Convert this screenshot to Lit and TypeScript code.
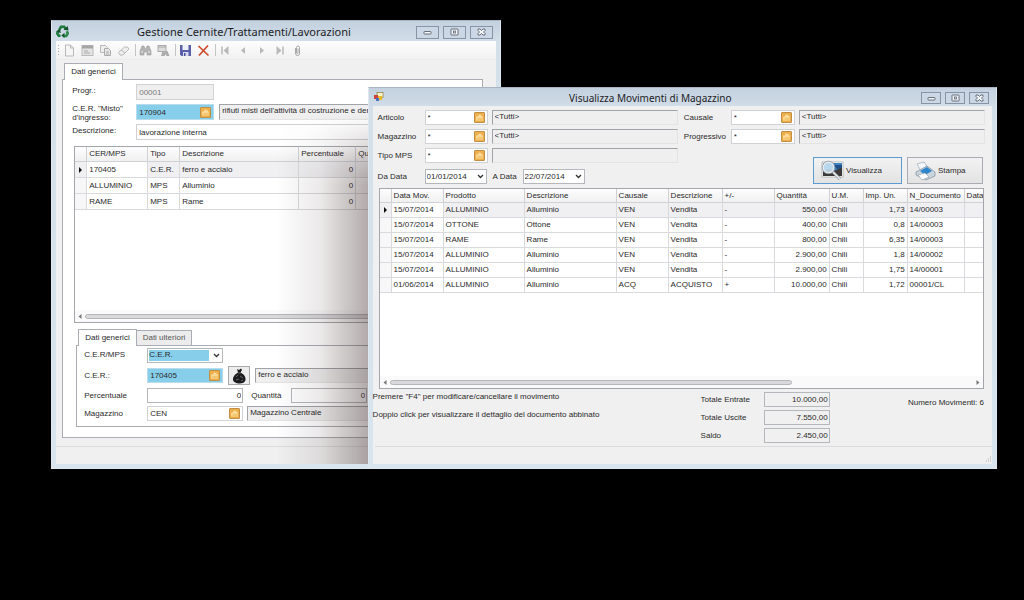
import { LitElement, html, css, svg, nothing } from "lit";
import { customElement, property } from "lit/decorators.js";

const controls = css`
  * { box-sizing: border-box; }
  :host { --ui: 8px; --line: #a9acb2; --soft: #d9dadd; }
  input, select, button {
    font: inherit; color: inherit; margin: 0; border-radius: 0; outline: none; min-width: 0;
  }
  input {
    width: 100%; height: 15px; padding: 0 2px; border: 1px solid #d0d2d6; background: #fff; display: block;
  }
  input.sunken { background: #efefef; border-color: #a0a3a8 #e4e4e4 #e4e4e4 #a0a3a8; padding: 0 2px 3px; }
  input.flat { background: #f0f0f0; }
  input.num { text-align: right; padding: 0 1px; border-color: #b4b7bc; }
  input.sky { background: #87ceeb; border-color: #b9dcec; }
  input.dim { color: #777; background: #efefef; }
  .lookup { display: grid; grid-template-columns: minmax(0, 1fr); align-items: center; }
  .lookup > * { grid-area: 1 / 1; }
  .lookup button {
    justify-self: end; width: 11px; height: 11px; margin-right: 3px; padding: 0; border: 0; background: none; display: block;
  }
  .drop { display: grid; grid-template-columns: minmax(0, 1fr); align-items: center; }
  .drop > * { grid-area: 1 / 1; }
  .drop select {
    appearance: none; width: 100%; height: 15px; padding: 0 1px; border: 1px solid #b4b7bc; background: #fff;
  }
  .drop select.picked {
    background: linear-gradient(#87ceeb, #87ceeb) 1px 1px / calc(100% - 14px) 11px no-repeat #fff;
  }
  .drop svg { justify-self: end; margin-right: 3px; pointer-events: none; }
  svg { display: block; }
  label, span { white-space: nowrap; }
  .grid { background: #fff; border: 1px solid #a3a6ab; overflow: hidden; display: flex; flex-direction: column; }
  table { table-layout: fixed; width: 100%; border-collapse: separate; border-spacing: 0; }
  th, td {
    padding: 0 2px; text-align: left; font-weight: normal; white-space: nowrap; overflow: hidden;
    border-right: 1px solid var(--soft); border-bottom: 1px solid var(--soft);
  }
  th { background: linear-gradient(#fdfdfd, #f1f1f2); border-color: #cfd1d5; }
  th:last-child { padding-right: 0; }
  td:first-child { background: #f7f7f7; }
  tr.current td { background: #f0f0f2; }
  tr.current td:nth-child(2) { background: #fff; }
  td.r { text-align: right; }
  .mark { margin-left: 1px; }
  .bar { margin-top: auto; height: 12px; display: flex; align-items: center; gap: 3px; padding: 0 3px; background: #fafafa; }
  .track { flex: 1; display: flex; }
  .thumb { height: 5px; border: 1px solid #b5b6ba; border-radius: 3px; background: #d9d9dc; }
`;

const chevron = html`<svg width="7" height="5" viewBox="0 0 7 5"><path d="M1 1l2.500 2.500L6 1" fill="none" stroke="#333" stroke-width="1.300"/></svg>`;
const arrow = (left: boolean) => html`<svg width="4" height="5" viewBox="0 0 4 5"><path d=${left ? "M3.500 0v5L.5 2.500z" : "M.5 0v5l3-2.500z"} fill="#777"/></svg>`;
const mark = html`<svg class="mark" width="5" height="6" viewBox="0 0 5 6"><path d="M1 0v6l3-3z" fill="#111"/></svg>`;

const lookup = (id: string, value: string, tone = "") => html`<div class="lookup">
  <input id=${id} class=${tone} .value=${value} />
  <button aria-label="Cerca"><svg width="11" height="11" viewBox="0 0 11 11">
    <rect x=".5" y=".5" width="10" height="10" rx=".5" fill="#eeb04c" stroke="#c08f45"/>
    <path d="M2.200 8.500V4.500h1.500L5 2.500l2 .5 1.800 2v3.500z" fill="#fbdc9c"/>
    <path d="M2.500 8.800L4 5.800h5.200l-.9 3z" fill="#f6c773"/></svg></button>
</div>`;

const drop = (id: string, value: string, tone = "") => html`<div class="drop">
  <select id=${id} class=${tone}><option>${value}</option></select>${chevron}
</div>`;

@customElement("desk-window")
class DeskWindow extends LitElement {
  @property() heading = "";
  static styles = css`
    * { box-sizing: border-box; }
    :host {
      box-sizing: border-box; isolation: isolate;
      display: flex; flex-direction: column; background: linear-gradient(#c3d0df, #d3dfe9 22px, #d9e5ee);
      border: 1px solid #dfe8ef; border-top-color: #a9b5c2; padding: 0 4px 4px;
    }
    header { display: grid; grid-template-columns: 30px minmax(0, 1fr) 94px; align-items: center; height: var(--bar, 20px); }
    h1 { margin: 0; text-align: center; font: 10px/16px "Noto Sans", sans-serif; font-size: var(--title, 10px); color: #1d1d1f; white-space: nowrap; padding-top: 2px; }
    .buttons { display: flex; gap: 4px; justify-content: flex-end; padding: 2px 3px 0 0; }
    button { width: var(--btn, 20px); height: var(--btnh, 12px); padding: 0; border: 1px solid #8694a6; background: #cbd7e4; display: grid; place-items: center; }
    svg { display: block; }
    main { flex: 1; display: flex; flex-direction: column; background: #f0f0f0; min-width: 0; }
  `;
  render() {
    return html`<header>
        <slot name="icon"></slot>
        <h1>${this.heading}</h1>
        <div class="buttons">
          <button aria-label="Riduci a icona"><svg width="9" height="8" viewBox="0 0 9 8"><rect x="1" y="3.500" width="7" height="2.500" rx=".5" fill="#f3f6f9" stroke="#5a626d" stroke-width=".9"/></svg></button>
          <button aria-label="Ingrandisci"><svg width="9" height="8" viewBox="0 0 9 8"><rect x="1" y="1" width="7" height="6" rx=".5" fill="#f3f6f9" stroke="#5a626d" stroke-width=".9"/><rect x="3.500" y="3" width="2" height="2" fill="none" stroke="#5a626d" stroke-width=".8"/></svg></button>
          <button aria-label="Chiudi"><svg width="9" height="8" viewBox="0 0 9 8"><path d="M1 1h2l1.500 1.500L6 1h2v1.500L6.500 4 8 5.500V7H6L4.500 5.500 3 7H1V5.500L2.500 4 1 2.500z" fill="#f3f6f9" stroke="#5a626d" stroke-width=".9"/></svg></button>
        </div>
      </header>
      <main><slot></slot></main>`;
  }
}

const recycle = html`<svg slot="icon" width="13" height="13" viewBox="0 0 13 13">
  <path d="M3.200 5L5 1.800h3.200L9.800 4" fill="none" stroke="#1f7a3d" stroke-width="2.600"/>
  <path d="M7.500 4.800l5 .8-.8-4.600z" fill="#12552a"/>
  <path d="M10.800 6.300l1 2.200-1.600 2.500H7.500" fill="none" stroke="#2c8a4a" stroke-width="2.600"/>
  <path d="M8.500 7.800v5.200L5.300 10.500z" fill="#12552a"/>
  <path d="M4.500 10.800H2.800L1.200 8.400l1-1.800" fill="none" stroke="#1f7a3d" stroke-width="2.600"/>
  <path d="M0 6.500l3.600-2.500L5 8z" fill="#12552a"/></svg>`;

const tool = (label: string, art: unknown) => html`<button aria-label=${label}><svg width="13" height="13" viewBox="0 0 13 13">${art}</svg></button>`;

@customElement("sorting-form")
class SortingForm extends LitElement {
  static styles = [controls, css`
    :host { flex: 1; display: flex; flex-direction: column; font: 8px/10px "Liberation Sans", Arial, sans-serif; font-size: var(--ui); color: #2a2a2a; position: relative; }
    nav { display: flex; align-items: center; height: 19px; padding: 0 1px; background: linear-gradient(#fdfdfd, #f1f1f1); border-bottom: 1px solid #ececec; }
    nav button { width: 13px; height: 13px; padding: 0; border: 0; background: none; margin-right: 5px; }
    .sep { width: 1px; height: 12px; background: #c4c4c4; margin: 0 3px 0 0; }
    .grip { width: 3px; margin-right: 3px; }
    .tabs { display: flex; }
    .tabs button { height: 17px; padding: 0 6px; border: 1px solid var(--line); border-bottom: 0; background: #fff; margin-bottom: -1px; z-index: 1; }
    .tabs button.off { background: #ececec; height: 15px; margin-top: 1px; border-left: 0; color: #555; }
    .outer { padding: 3px 13px 8px 6px; flex: 1; }
    .outer > .tabs { padding-left: 2px; }
    .panel { border: 1px solid var(--line); background: #fff; }
    .page { height: 359px; padding: 4px 0 0 11px; }
    .head { display: grid; grid-template-columns: 62px minmax(0, 1fr); row-gap: 4px; }
    .head > label { margin-left: -2px; padding-top: 2px; }
    .head > label.two { padding-top: 0; line-height: 9px; }
    .head .pair { display: grid; grid-template-columns: 78px minmax(0, 1fr); gap: 5px; }
    .head label { white-space: normal; height: 16px; }
    .head input { height: 16px; }
    .grid { height: 177px; margin-top: 6px; }
    th { height: 15px; line-height: 14px; }
    td { height: 16px; line-height: 15px; }
    .below { padding: 6px 0 0 2px; }
    .below .tabs { padding-left: 2px; }
    .inner { height: 82px; padding: 1px 0 0 7px; display: grid; grid-template-columns: 63px minmax(0, 1fr); grid-template-rows: 16px 19px 15px 15px; row-gap: 3px; align-items: center; align-content: start; }
    .row { display: flex; align-items: center; }
    .w76 { width: 76px; } .w96 { width: 96px; }
    .bag { width: 22px; height: 19px; padding: 0; border: 1px solid #a9a9a9; background: #ededed; margin: 0 5px; display: grid; place-items: center; }
    .grow { flex: 1; }
    .gap { width: 48px; padding-left: 8px; }
    .row .grow.after { margin-left: 4px; }
    footer { height: 18px; border-top: 1px solid #dcdcdc; }
    .shade { position: absolute; inset: 74px 0 0 0; pointer-events: none; z-index: 2;
      background: linear-gradient(90deg, rgba(60, 40, 40, 0) 50%, rgba(60, 40, 40, .1) 60%, rgba(60, 40, 40, .42) 72%);
      mask-image: linear-gradient(transparent, #000 70px); }
  `];
  render() {
    const g = "#b9b9b9";
    const rows = [["170405", "C.E.R.", "ferro e acciaio"], ["ALLUMINIO", "MPS", "Alluminio"], ["RAME", "MPS", "Rame"]];
    return html`
      <nav>
        <svg class="grip" width="3" height="12" viewBox="0 0 3 12"><path d="M1.500 1v11" stroke="#aaa" stroke-dasharray="1 2"/></svg>
        ${tool("Nuovo", svg`<path d="M2.500 1h5l3 3v8h-8z" fill="#f6f6f6" stroke=${g}/><path d="M7.500 1v3h3" fill="none" stroke=${g}/>`)}
        ${tool("Apri", svg`<rect x="1" y="1.500" width="11" height="10" fill="#e3e3e3" stroke=${g}/><path d="M1 3h11" stroke="#a5a5a5" stroke-width="3"/><path d="M3 7h4M3 9h6" stroke="#aaa"/>`)}
        ${tool("Copia", svg`<path d="M1.500 1.500h5l2 2v5h-7z" fill="#eee" stroke=${g}/><path d="M5.500 4.500h4l2 2v5h-6z" fill="#e6e6e6" stroke="#aaa"/><path d="M7 8h3M7 10h3" stroke="#aaa"/>`)}
        ${tool("Cancella", svg`<path d="M1.500 8.500l6-5.500h3l1.500 2-6 6h-3z" fill="#eee" stroke=${g}/><path d="M4 6l4 3" stroke=${g}/>`)}
        <i class="sep"></i>
        ${tool("Trova", svg`<path d="M1 11V7l2-5h2l1 3h1l1-3h2l2 5v4H8V8H5v3z" fill="#b4b4b4" stroke="#9a9a9a" stroke-width=".6"/><path d="M2 8h2M9 8h2" stroke="#eee"/>`)}
        ${tool("Filtro", svg`<rect x="1" y="1.500" width="8" height="6" fill="#ddd" stroke="#aaa"/><path d="M1 3h8" stroke="#aaa"/><path d="M4 12l1.500-5h2l.5 2 .5-2h2L12.500 12h-3l-1-2-1 2z" fill="#ababab"/>`)}
        <i class="sep"></i>
        ${tool("Salva", svg`<path d="M1 1h11v11H2.500L1 10.500z" fill="#5a5fa8"/><rect x="3.500" y="1" width="6" height="5" fill="#eef0fb"/><rect x="4" y="8" width="5.500" height="4" fill="#d8daf0"/><rect x="5" y="9" width="1.500" height="3" fill="#4a4f9e"/>`)}
        ${tool("Elimina", svg`<path d="M1.500 2l10 9.500M11 1.500L2 11.500" stroke="#cf4a2c" stroke-width="1.700" fill="none"/>`)}
        <i class="sep"></i>
        ${tool("Primo", svg`<path d="M3 2.500v8" stroke=${g} stroke-width="1.500"/><path d="M9.500 2v9L4.500 6.500z" fill=${g}/>`)}
        ${tool("Precedente", svg`<path d="M8 3v7L4 6.500z" fill=${g}/>`)}
        ${tool("Successivo", svg`<path d="M5 3v7l4-3.500z" fill=${g}/>`)}
        ${tool("Ultimo", svg`<path d="M10 2.500v8" stroke=${g} stroke-width="1.500"/><path d="M3.500 2v9l5-4.500z" fill=${g}/>`)}
        ${tool("Allegati", svg`<path d="M4.500 4v5.500a2 2 0 0 0 4 0V3.500a1.500 1.500 0 0 0-3 0v5.500a.8.8 0 0 0 1.500 0V4.500" fill="none" stroke="#a8a8a8"/>`)}
      </nav>
      <div class="outer">
        <div class="tabs"><button>Dati generici</button></div>
        <div class="panel page">
          <div class="head">
            <label for="prog">Progr.:</label>
            <div class="pair"><input id="prog" class="dim" .value=${"00001"} disabled /></div>
            <label class="two" for="misto">C.E.R. "Misto"<br />d'ingresso:</label>
            <div class="pair">${lookup("misto", "170904", "sky")}<input class="sunken" aria-label="Descrizione C.E.R." readonly .value=${"rifiuti misti dell'attività di costruzione e demolizione"} /></div>
            <label for="descr">Descrizione:</label>
            <input id="descr" .value=${"lavorazione interna"} />
          </div>
          <div class="grid">
            <table>
              <colgroup><col style="width:12px" /><col style="width:61px" /><col style="width:32px" /><col style="width:119px" /><col style="width:57px" /><col /></colgroup>
              <thead><tr><th></th><th>CER/MPS</th><th>Tipo</th><th>Descrizione</th><th>Percentuale</th><th>Quantità</th></tr></thead>
              <tbody>${rows.map((r, i) => html`<tr class=${i ? "" : "current"}><td>${i ? nothing : mark}</td>${r.map((c) => html`<td>${c}</td>`)}<td class="r">0</td><td class="r">0</td></tr>`)}</tbody>
            </table>
            <div class="bar">${arrow(true)}<div class="track"><div class="thumb" style="width:100%"></div></div></div>
          </div>
          <div class="below">
            <div class="tabs"><button>Dati generici</button><button class="off">Dati ulteriori</button></div>
            <div class="panel inner">
              <label for="kind">C.E.R/MPS</label>
              <div class="w76">${drop("kind", "C.E.R.", "picked")}</div>
              <label for="cer">C.E.R.:</label>
              <div class="row"><div class="w76">${lookup("cer", "170405", "sky")}</div>
                <button class="bag" aria-label="Rifiuto"><svg width="15" height="16" viewBox="0 0 15 16"><path d="M5 1l2 1 2-1.500 1 1.500-1.500 2.500C12 6 14 9 13.500 12c-.5 2.500-3 3.500-6 3.500S1.500 14 1 12c-.3-3 2-6 5-7.500z" fill="#1c1c1e"/><path d="M4 9l2-2M8 8l3 2M4 12l3-1M9 13l2-1M6 5h3" stroke="#777" stroke-width=".8"/></svg></button>
                <input class="sunken grow" aria-label="Descrizione" readonly .value=${"ferro e acciaio"} /></div>
              <label for="perc">Percentuale</label>
              <div class="row"><div class="w96"><input id="perc" class="num" .value=${"0"} /></div><label class="gap" for="qta">Quantità</label><div class="w76"><input id="qta" class="num" .value=${"0"} /></div></div>
              <label for="mag">Magazzino</label>
              <div class="row"><div class="w96">${lookup("mag", "CEN")}</div><input class="sunken grow after" aria-label="Nome magazzino" readonly .value=${"Magazzino Centrale"} /></div>
            </div>
          </div>
        </div>
      </div>
      <footer></footer>
      <div class="shade"></div>`;
  }
}

@customElement("movements-view")
class MovementsView extends LitElement {
  static styles = [controls, css`
    :host { flex: 1; display: flex; flex-direction: column; font: 8px/10px "Liberation Sans", Arial, sans-serif; font-size: var(--ui); color: #2a2a2a; }
    .filters { display: grid; grid-template-columns: 47px 63px minmax(0, 1fr) 53px 64px minmax(0, 1fr); row-gap: 4px; padding: 4px 7px 0 5px; align-items: center; }
    .filters .sunken { margin-left: 4px; width: calc(100% - 4px); }
    .filters .second { padding-left: 6px; }
    .dates { display: grid; grid-template-columns: 47px 62px 36px 62px 1fr auto; align-items: end; padding: 0 9px 0 5px; }
    .dates label { line-height: 15px; }
    .dates .a { padding-left: 6px; }
    .actions { display: flex; gap: 5px; margin-top: -6px; grid-column: 6; }
    .actions button { height: 27px; display: flex; align-items: center; border: 1px solid #a9acb2; background: linear-gradient(#f2f2f2, #e3e3e4); gap: 2px; padding: 0 7px; }
    .actions .main { width: 89px; border-color: #5b9bd0; }
    .actions .print { width: 76px; }
    .grid { height: 201px; margin: 4px 8px 0 6px; }
    th { height: 14px; line-height: 13px; } td { height: 15px; line-height: 14px; }
    th:last-child, td:last-child { border-right: 0; }
    .summary { display: grid; grid-template-columns: 328px 63px 66px 1fr; padding: 3px 8px 0 0; height: 57px; }
    .notes { display: flex; flex-direction: column; gap: 8px; }
    .totals { grid-column: 2 / 4; display: grid; grid-template-columns: 63px 66px; row-gap: 3px; align-items: center; align-content: start; }
    p { margin: 0; white-space: nowrap; }
    .count { text-align: right; padding-top: 6px; }
    footer { height: 18px; margin: 0 0 0 2px; border-top: 1px solid #dadada; display: flex; justify-content: flex-end; align-items: flex-end; }
  `];
  render() {
    const cols = [12, 52, 81, 92, 52, 54, 52, 55, 34, 44, 57];
    const heads = ["", "Data Mov.", "Prodotto", "Descrizione", "Causale", "Descrizione", "+/-", "Quantità", "U.M.", "Imp. Un.", "N_Documento", "Data"];
    const rows = [
      ["15/07/2014", "ALLUMINIO", "Alluminio", "VEN", "Vendita", "-", "550,00", "Chili", "1,73", "14/00003"],
      ["15/07/2014", "OTTONE", "Ottone", "VEN", "Vendita", "-", "400,00", "Chili", "0,8", "14/00003"],
      ["15/07/2014", "RAME", "Rame", "VEN", "Vendita", "-", "800,00", "Chili", "6,35", "14/00003"],
      ["15/07/2014", "ALLUMINIO", "Alluminio", "VEN", "Vendita", "-", "2.900,00", "Chili", "1,8", "14/00002"],
      ["15/07/2014", "ALLUMINIO", "Alluminio", "VEN", "Vendita", "-", "2.900,00", "Chili", "1,75", "14/00001"],
      ["01/06/2014", "ALLUMINIO", "Alluminio", "ACQ", "ACQUISTO", "+", "10.000,00", "Chili", "1,72", "00001/CL"],
    ];
    const totals = [["Totale Entrate", "10.000,00"], ["Totale Uscite", "7.550,00"], ["Saldo", "2.450,00"]];
    const wide = (name: string, v: string) => html`<input class="sunken" aria-label=${name} readonly .value=${v} />`;
    return html`
      <div class="filters">
        <label for="art">Articolo</label>${lookup("art", "*")}${wide("Nome articolo", "<Tutti>")}
        <label class="second" for="cau">Causale</label>${lookup("cau", "*")}${wide("Nome causale", "<Tutti>")}
        <label for="mag">Magazzino</label>${lookup("mag", "*")}${wide("Nome magazzino", "<Tutti>")}
        <label class="second" for="pro">Progressivo</label>${lookup("pro", "*")}${wide("Nome progressivo", "<Tutti>")}
        <label for="mps">Tipo MPS</label>${lookup("mps", "*")}${wide("Nome MPS", "")}
      </div>
      <div class="dates">
        <label for="from">Da Data</label>${drop("from", "01/01/2014")}
        <label class="a" for="to">A Data</label>${drop("to", "22/07/2014")}
        <div class="actions">
          <button class="main"><svg width="23" height="21" viewBox="0 0 23 21">
            <rect x="1" y="2" width="21" height="15" fill="#fff" stroke="#999" stroke-width=".6"/><rect x="2" y="3" width="19" height="13" fill="#3f84c4"/>
            <path d="M2 12l6-3 5 2 8-4v9H2z" fill="#3b3a38"/><path d="M13 5h8v3l-5 1z" fill="#1e4f86"/>
            <circle cx="7.500" cy="7.500" r="5.500" fill="#cfe5f5" fill-opacity=".85" stroke="#e9edf0" stroke-width="1.600"/><circle cx="7.500" cy="7.500" r="6.300" fill="none" stroke="#77828c" stroke-width=".6"/>
            <path d="M12 12l7 7" stroke="#8c939a" stroke-width="3"/><path d="M12 12l7 7" stroke="#eceff1" stroke-width="1.500"/></svg>Visualizza</button>
          <button class="print"><svg width="21" height="20" viewBox="0 0 21 20">
            <path d="M2 3l7-2 4 6-7 3z" fill="#f4f8fb" stroke="#9aa7b3" stroke-width=".7"/>
            <path d="M1 11l11-6 8 6v4l-9 4L1 14z" fill="#c9d4dd" stroke="#7f8d9a" stroke-width=".7"/>
            <path d="M5 10l7-4 5 4-7 4z" fill="#2d86cc"/><path d="M3 14l7-2 4 4-7 3z" fill="#fff" stroke="#9aa7b3" stroke-width=".7"/></svg>Stampa</button>
        </div>
      </div>
      <div class="grid">
        <table>
          <colgroup>${cols.map((w) => html`<col style="width:${w}px" />`)}<col /></colgroup>
          <thead><tr>${heads.map((h) => html`<th>${h}</th>`)}</tr></thead>
          <tbody>${rows.map((r, i) => html`<tr class=${i ? "" : "current"}><td>${i ? nothing : mark}</td>${r.map((c, k) => html`<td class=${k === 6 || k === 8 ? "r" : ""}>${c}</td>`)}<td></td></tr>`)}</tbody>
        </table>
        <div class="bar">${arrow(true)}<div class="track"><div class="thumb" style="width:69%"></div></div>${arrow(false)}</div>
      </div>
      <div class="summary">
        <div class="notes"><p>Premere "F4" per modificare/cancellare il movimento</p><p>Doppio click per visualizzare il dettaglio del documento abbinato</p></div>
        <div class="totals">${totals.map(([n, v], i) => html`<label for=${"t" + i}>${n}</label><input id=${"t" + i} class="num flat" readonly .value=${v} />`)}</div>
        <p class="count">Numero Movimenti: 6</p>
      </div>
      <footer><svg width="8" height="8" viewBox="0 0 8 8"><path d="M6 1h1M4 3h1M6 3h1M2 5h1M4 5h1M6 5h1" stroke="#b5b5b5"/></svg></footer>`;
  }
}

@customElement("app-root")
class AppRoot extends LitElement {
  static styles = css`
    :host { display: block; position: relative; min-height: 100vh; background: #000; overflow: hidden; }
    .sorting { position: absolute; left: 5%; top: 20px; width: 43.9%; --title: 11px; --bar: 20px; --btn: 23px; --btnh: 13px; }
    .moves { position: absolute; left: 35.9%; right: 27px; top: 87px; --bar: 18px; }
  `;
  render() {
    return html`
      <desk-window class="sorting" heading="Gestione Cernite/Trattamenti/Lavorazioni">${recycle}<sorting-form></sorting-form></desk-window>
      <desk-window class="moves" heading="Visualizza Movimenti di Magazzino">
        <svg slot="icon" width="11" height="10" viewBox="0 0 11 10"><rect x="4" y=".5" width="6" height="5" fill="#fff5c9" stroke="#8c7a34" stroke-width=".7"/><rect x="1" y="3" width="4" height="4" fill="#c8423a"/><rect x="5" y="4" width="4" height="4" fill="#e8b92c"/><rect x="3" y="6" width="3" height="3" fill="#4b6fc0"/></svg>
        <movements-view></movements-view>
      </desk-window>`;
  }
}
